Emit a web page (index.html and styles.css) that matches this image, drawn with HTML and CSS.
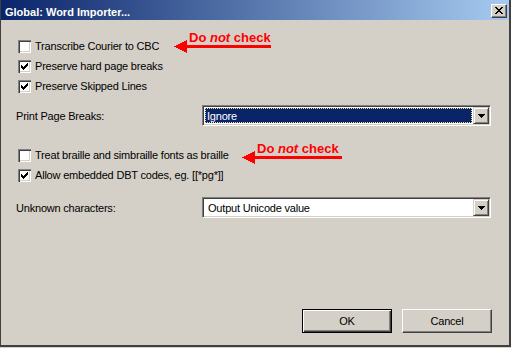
FILE: index.html
```html
<!DOCTYPE html>
<html>
<head>
<meta charset="utf-8">
<link rel="stylesheet" href="styles.css">
</head>
<body>
<div class="window">
  <div class="titlebar">
    <span class="title">Global: Word Importer...</span>
    <div class="close"><svg width="8" height="7" viewBox="0 0 8 7" shape-rendering="crispEdges"><g fill="#000"><rect x="0" y="0" width="2" height="1"/><rect x="6" y="0" width="2" height="1"/><rect x="1" y="1" width="2" height="1"/><rect x="5" y="1" width="2" height="1"/><rect x="2" y="2" width="4" height="1"/><rect x="3" y="3" width="2" height="1"/><rect x="2" y="4" width="4" height="1"/><rect x="1" y="5" width="2" height="1"/><rect x="5" y="5" width="2" height="1"/><rect x="0" y="6" width="2" height="1"/><rect x="6" y="6" width="2" height="1"/></g></svg></div>
  </div>
  <div class="content">
    <div class="group group-first">
      <div class="check"><span class="box"></span><span class="label">Transcribe Courier to CBC</span></div>
      <div class="check"><span class="box"><svg width="13" height="13" viewBox="0 0 13 13" shape-rendering="crispEdges"><polygon fill="#000" points="3,5 4,5 4,6 5,6 5,7 6,7 6,6 7,6 7,5 8,5 8,4 9,4 9,3 10,3 10,6 9,6 9,7 8,7 8,8 7,8 7,9 6,9 6,10 5,10 5,9 4,9 4,8 3,8"/></svg></span><span class="label">Preserve hard page breaks</span></div>
      <div class="check"><span class="box"><svg width="13" height="13" viewBox="0 0 13 13" shape-rendering="crispEdges"><polygon fill="#000" points="3,5 4,5 4,6 5,6 5,7 6,7 6,6 7,6 7,5 8,5 8,4 9,4 9,3 10,3 10,6 9,6 9,7 8,7 8,8 7,8 7,9 6,9 6,10 5,10 5,9 4,9 4,8 3,8"/></svg></span><span class="label">Preserve Skipped Lines</span></div>
    </div>
    <div class="field field-first">
      <span class="field-label">Print Page Breaks:</span>
      <div class="combo">
        <div class="combo-field"><span class="combo-text selected">Ignore</span></div>
        <div class="combo-btn"><svg width="7" height="4" viewBox="0 0 7 4" shape-rendering="crispEdges"><g fill="#000"><rect x="0" y="0" width="7" height="1"/><rect x="1" y="1" width="5" height="1"/><rect x="2" y="2" width="3" height="1"/><rect x="3" y="3" width="1" height="1"/></g></svg></div>
      </div>
    </div>
    <div class="group group-second">
      <div class="check"><span class="box"></span><span class="label">Treat braille and simbraille fonts as braille</span></div>
      <div class="check"><span class="box"><svg width="13" height="13" viewBox="0 0 13 13" shape-rendering="crispEdges"><polygon fill="#000" points="3,5 4,5 4,6 5,6 5,7 6,7 6,6 7,6 7,5 8,5 8,4 9,4 9,3 10,3 10,6 9,6 9,7 8,7 8,8 7,8 7,9 6,9 6,10 5,10 5,9 4,9 4,8 3,8"/></svg></span><span class="label">Allow embedded DBT codes, eg. [[*pg*]]</span></div>
    </div>
    <div class="field field-second">
      <span class="field-label">Unknown characters:</span>
      <div class="combo">
        <div class="combo-field"><span class="combo-text">Output Unicode value</span></div>
        <div class="combo-btn"><svg width="7" height="4" viewBox="0 0 7 4" shape-rendering="crispEdges"><g fill="#000"><rect x="0" y="0" width="7" height="1"/><rect x="1" y="1" width="5" height="1"/><rect x="2" y="2" width="3" height="1"/><rect x="3" y="3" width="1" height="1"/></g></svg></div>
      </div>
    </div>
    <div class="buttons">
      <div class="btn btn-default">OK</div>
      <div class="btn">Cancel</div>
    </div>
  </div>
  <div class="note note-one">
    <svg class="arrow" width="100" height="24" viewBox="0 0 100 24" shape-rendering="crispEdges"><polygon fill="#f00" points="1,15.5 14,9 14,22"/><rect fill="#f00" x="12" y="14" width="86" height="3"/></svg>
    <span class="note-text">Do <i>not</i> check</span>
  </div>
  <div class="note note-two">
    <svg class="arrow" width="104" height="24" viewBox="0 0 104 24" shape-rendering="crispEdges"><polygon fill="#f00" points="1,15.5 14,9 14,22"/><rect fill="#f00" x="12" y="14" width="89" height="3"/></svg>
    <span class="note-text">Do <i>not</i> check</span>
  </div>
</div>
</body>
</html>
```

FILE: styles.css
```css
html, body {
  margin: 0;
  padding: 0;
}
body {
  width: 511px;
  height: 348px;
  overflow: hidden;
  background: #d4d0c8;
  font-family: "Liberation Sans", Arial, sans-serif;
  font-size: 11px;
  color: #000;
}
.window {
  position: relative;
  box-sizing: border-box;
  width: 511px;
  height: 347px;
  border-left: 1px solid #404040;
  border-right: 2px solid #404040;
  border-bottom: 2px solid #404040;
  background: #d4d0c8;
  display: flex;
  flex-direction: column;
}
.titlebar {
  height: 20px;
  flex: 0 0 20px;
  display: flex;
  align-items: flex-start;
  justify-content: space-between;
  padding: 0 2px 0 4px;
  background: linear-gradient(to right, #0a246a, #a6caf0);
}
.title {
  color: #fff;
  font-weight: bold;
  font-size: 11px;
  line-height: 13px;
  padding-top: 6px;
}
.close {
  margin-top: 4px;
  width: 16px;
  height: 14px;
  box-sizing: border-box;
  background: #d4d0c8;
  border: 1px solid;
  border-color: #fff #404040 #404040 #fff;
  box-shadow: inset -1px -1px #808080;
  padding: 2px 0 0 3px;
  display: flex;
  align-items: flex-start;
}
.close svg, .box svg, .combo-btn svg {
  display: block;
}
.content {
  flex: 1;
  display: flex;
  flex-direction: column;
  padding: 0 17px 12px 15px;
  letter-spacing: -0.2px;
}
.group-first {
  margin-top: 17px;
}
.group-second {
  margin-top: 20px;
}
.check {
  height: 20px;
  display: flex;
  align-items: flex-start;
}
.box {
  margin: 3px 4px 0 2px;
  width: 13px;
  height: 13px;
  box-sizing: border-box;
  flex: 0 0 13px;
  background: #fff;
  position: relative;
  box-shadow: inset 1px 1px #808080, inset 2px 2px #404040, inset -1px -1px #fff, inset -2px -2px #d4d0c8;
}
.box svg {
  position: absolute;
  left: 0;
  top: 0;
}
.label {
  line-height: 19px;
  white-space: nowrap;
}
.field {
  display: flex;
  align-items: center;
  height: 21px;
}
.field-first {
  margin-top: 8px;
}
.field-second {
  margin-top: 11px;
}
.field-label {
  flex: 0 0 186px;
  white-space: nowrap;
}
.combo {
  flex: 1;
  margin-right: 1px;
  height: 21px;
  box-sizing: border-box;
  border: 1px solid;
  border-color: #808080 #fff #fff #808080;
  box-shadow: inset 1px 1px #404040, inset -1px -1px #d4d0c8;
  background: #fff;
  display: flex;
  padding: 1px;
}
.combo-field {
  flex: 1;
  display: flex;
  padding: 1px;
}
.combo-text {
  flex: 1;
  box-sizing: border-box;
  padding-left: 2px;
  line-height: 15px;
  white-space: nowrap;
  border: 1px solid transparent;
}
.combo-text.selected {
  background: #0a246a;
  color: #fff;
  border: 1px dotted #f3dc8a;
  padding-left: 1px;
}
.combo-btn {
  flex: 0 0 16px;
  box-sizing: border-box;
  background: #d4d0c8;
  border: 1px solid;
  border-color: #d4d0c8 #404040 #404040 #d4d0c8;
  box-shadow: inset 1px 1px #fff, inset -1px -1px #808080;
  display: flex;
  align-items: center;
  justify-content: center;
  padding-top: 1px;
}
.buttons {
  margin-top: auto;
  display: flex;
  justify-content: flex-end;
  gap: 10px;
}
.btn {
  width: 90px;
  height: 24px;
  box-sizing: border-box;
  background: #d4d0c8;
  border: 1px solid;
  border-color: #fff #404040 #404040 #fff;
  box-shadow: inset -1px -1px #808080;
  display: flex;
  align-items: center;
  justify-content: center;
}
.btn-default {
  border: 1px solid #000;
  box-shadow: inset 1px 1px #fff, inset -1px -1px #404040, inset -2px -2px #808080;
}
.note {
  position: absolute;
  height: 24px;
}
.note-one {
  left: 172px;
  top: 31px;
  width: 100px;
}
.note-two {
  left: 240px;
  top: 142px;
  width: 104px;
}
.arrow {
  position: absolute;
  left: 0;
  top: 0;
}
.note-text {
  position: relative;
  display: block;
  margin-left: 16px;
  color: #f00;
  font-weight: bold;
  font-size: 13px;
  line-height: 13px;
  white-space: nowrap;
}
```
